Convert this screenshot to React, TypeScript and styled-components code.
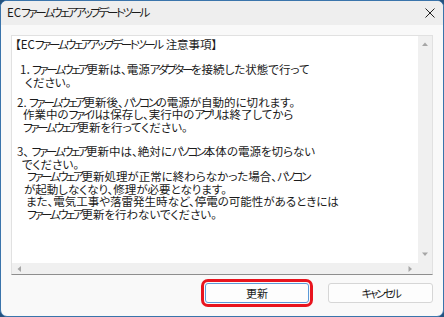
import React from "react";
import styled, { createGlobalStyle } from "styled-components";

const Global = createGlobalStyle`
  html, body { margin: 0; padding: 0; background: #24527e; }
  body { font-family: "Noto Sans CJK JP", "Noto Sans", sans-serif; }
  #root { width: 444px; height: 317px; }
`;

const FONT = `"Noto Sans CJK JP", "Noto Sans", sans-serif`;

const Window = styled.div`
  width: 444px;
  height: 317px;
  box-sizing: border-box;
  border: 1px solid #3a74ab;
  border-radius: 7px;
  overflow: hidden;
  background: #f9f9f9;
  display: flex;
  flex-direction: column;
  font-family: ${FONT};
  font-feature-settings: "palt";
  color: #1b1b1b;
`;

const TitleBar = styled.div`
  height: 24px;
  flex: none;
  background: #eeeeee;
  display: flex;
  align-items: center;
  justify-content: space-between;
  padding: 0 6px 0 6px;
  font-size: 11.5px;
`;

const Title = styled.span`
  line-height: 1;
`;

const CloseBtn = styled.div`
  width: 14px;
  height: 14px;
  display: flex;
  align-items: center;
  justify-content: center;
`;

const Body = styled.div`
  flex: 1;
  display: flex;
  flex-direction: column;
  padding: 10px 10px 0 10px;
`;

const TextBox = styled.div`
  height: 240px;
  box-sizing: border-box;
  border: 1px solid #e1e1e1;
  border-bottom-color: #8e8e8e;
  background: #ffffff;
  display: grid;
  grid-template-columns: 1fr 14px;
  grid-template-rows: 1fr 11px;
`;

const Content = styled.div`
  padding-top: 2px;
  font-size: 11.5px;
  line-height: 12.5px;
  overflow: hidden;
  white-space: nowrap;
`;

const Para = styled.div<{ $gap: number }>`
  margin-top: ${(p) => p.$gap}px;
`;

const Line = styled.div<{ $indent: number }>`
  padding-left: ${(p) => p.$indent}px;
`;

/* Katakana runs are narrower in the reference's UI font */
const Kata = styled.span`
  letter-spacing: -2.4px;
`;

const Gap = styled.span`
  display: inline-block;
  width: 4px;
`;

const VScroll = styled.div`
  grid-row: 1;
  grid-column: 2;
  background: #f0f0f0;
  display: flex;
  flex-direction: column;
  justify-content: space-between;
  align-items: center;
  padding: 6px 0 6px 0;
`;

const HScroll = styled.div`
  grid-row: 2;
  grid-column: 1 / span 2;
  background: #f0f0f0;
  display: flex;
  align-items: center;
  justify-content: space-between;
  padding: 0 19px 0 5px;
`;

const ButtonRow = styled.div`
  display: flex;
  justify-content: flex-end;
  gap: 19px;
  margin-top: 8px;
`;

const Button = styled.button<{ $primary?: boolean; $marked?: boolean }>`
  width: ${(p) => (p.$primary ? 104 : 105)}px;
  height: 20px;
  box-sizing: border-box;
  border-radius: 3px;
  border: 1px solid ${(p) => (p.$primary ? "#5b9ad8" : "#d6d6d6")};
  background: #fdfdfd;
  font-family: ${FONT};
  font-feature-settings: "palt";
  font-size: 11px;
  line-height: 1;
  color: #1b1b1b;
  padding: 0;
  outline: ${(p) => (p.$marked ? "3px solid #e8141e" : "none")};
  outline-offset: 1px;
`;

const KATA_RUN = /([\u30A0-\u30FF]+)/;

const Txt = ({ children }: { children: string }) => (
  <>
    {children.split(KATA_RUN).map((s, i) => (i % 2 ? <Kata key={i}>{s}</Kata> : s))}
  </>
);

const Arrow = ({ dir }: { dir: "up" | "down" | "left" | "right" }) => {
  const pts = {
    up: "0,4 3,0.5 6,4",
    down: "0,0.5 3,4 6,0.5",
    left: "4,0 0.5,3 4,6",
    right: "0.5,0 4,3 0.5,6",
  }[dir];
  const vertical = dir === "up" || dir === "down";
  return (
    <svg width={vertical ? 6 : 5} height={vertical ? 5 : 6} viewBox={vertical ? "0 0 6 5" : "0 0 5 6"}>
      <polygon points={pts} fill="#a6a6a6" />
    </svg>
  );
};

const para1 = [
  { i: 8, t: "1．ファームウェア更新は、電源アダプターを接続した状態で行って" },
  { i: 13, t: "ください。" },
];
const para2 = [
  { i: 5, t: "2. ファームウェア更新後、パソコンの電源が自動的に切れます。" },
  { i: 11, t: "作業中のファイルは保存し、実行中のアプリは終了してから" },
  { i: 11, t: "ファームウェア更新を行ってください。" },
];
const para3 = [
  { i: 5, t: "3、 ファームウェア更新中は、絶対にパソコン本体の電源を切らない" },
  { i: 10, t: "でください。" },
  { i: 15, t: "ファームウェア更新処理が正常に終わらなかった場合、パソコン" },
  { i: 12, t: "が起動しなくなり、修理が必要となります。" },
  { i: 14, t: "また、電気工事や落雷発生時など、停電の可能性があるときには" },
  { i: 15, t: "ファームウェア更新を行わないでください。" },
];

const renderLines = (lines: { i: number; t: string }[]) =>
  lines.map((l, k) => (
    <Line key={k} $indent={l.i}>
      <Txt>{l.t}</Txt>
    </Line>
  ));

export default function App() {
  return (
    <>
      <Global />
      <Window>
        <TitleBar>
          <Title>
            <Txt>ECファームウェアアップデートツール</Txt>
          </Title>
          <CloseBtn>
            <svg width="10" height="10" viewBox="0 0 10 10">
              <path d="M0.5 0.5 L9.5 9.5 M9.5 0.5 L0.5 9.5" stroke="#222" strokeWidth="1" fill="none" />
            </svg>
          </CloseBtn>
        </TitleBar>
        <Body>
          <TextBox>
            <Content>
              <Line $indent={3}>
                <Txt>【ECファームウェアアップデートツール</Txt>
                <Gap />
                注意事項】
              </Line>
              <Para $gap={12.5}>{renderLines(para1)}</Para>
              <Para $gap={7.5}>{renderLines(para2)}</Para>
              <Para $gap={12}>{renderLines(para3)}</Para>
            </Content>
            <VScroll>
              <Arrow dir="up" />
              <Arrow dir="down" />
            </VScroll>
            <HScroll>
              <Arrow dir="left" />
              <Arrow dir="right" />
            </HScroll>
          </TextBox>
          <ButtonRow>
            <Button $primary $marked>更新</Button>
            <Button>
              <Txt>キャンセル</Txt>
            </Button>
          </ButtonRow>
        </Body>
      </Window>
    </>
  );
}
